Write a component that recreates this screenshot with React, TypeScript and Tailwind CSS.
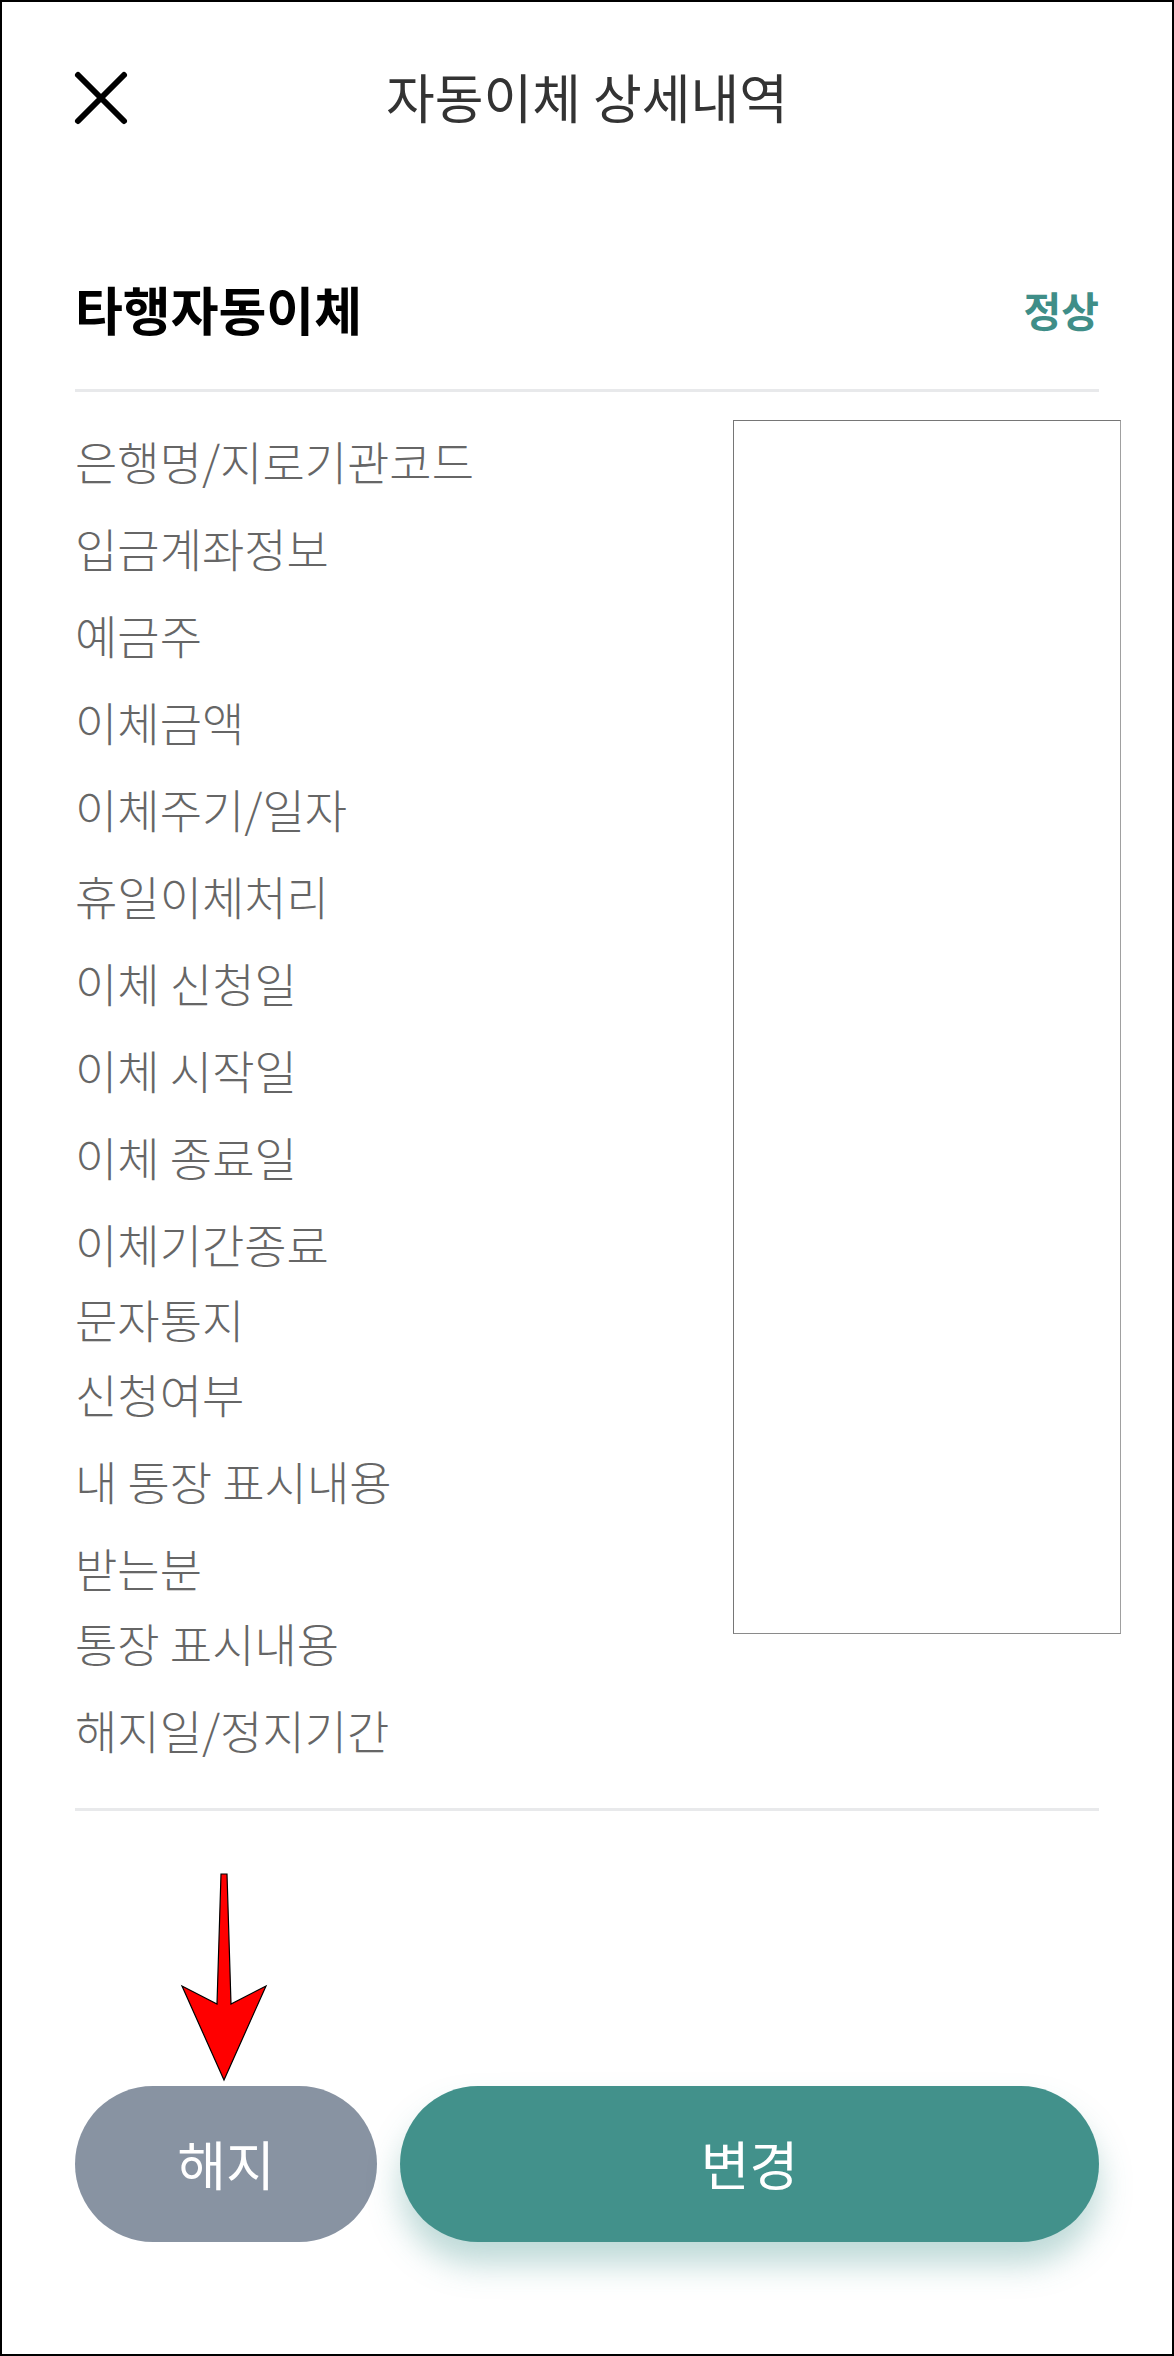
import React from "react";

const FONT = { fontFamily: '"Noto Sans CJK KR", "Noto Sans", sans-serif' };

type Row = string[];

const ROWS: Row[] = [
  ["은행명/지로기관코드"],
  ["입금계좌정보"],
  ["예금주"],
  ["이체금액"],
  ["이체주기/일자"],
  ["휴일이체처리"],
  ["이체 신청일"],
  ["이체 시작일"],
  ["이체 종료일"],
  ["이체기간종료", "문자통지", "신청여부"],
  ["내 통장 표시내용"],
  ["받는분", "통장 표시내용"],
  ["해지일/정지기간"],
];

function CloseIcon() {
  return (
    <svg width="56" height="56" viewBox="0 0 56 56" aria-hidden="true">
      <path d="M5 5 L51 51 M51 5 L5 51" stroke="#000" strokeWidth="6" strokeLinecap="round" fill="none" />
    </svg>
  );
}

function PointerArrow() {
  // red annotation arrow pointing at the 해지 button
  return (
    <svg className="absolute left-[178px] top-[1870px]" width="90" height="212" viewBox="0 0 90 212" aria-hidden="true">
      <polygon
        points="41,2 47,2 51,132 86,114 44,208 2,114 37,132"
        fill="#ff0000"
        stroke="#000"
        strokeWidth="1.2"
        strokeLinejoin="miter"
      />
    </svg>
  );
}

export default function App() {
  return (
    <div
      className="relative flex h-[2356px] w-[1174px] flex-col overflow-hidden border-2 border-black bg-white"
      style={FONT}
    >
      {/* header */}
      <div className="grid h-[188px] grid-cols-[1fr_auto_1fr] items-center px-[71px]">
        <div className="flex items-center pt-[4px]">
          <CloseIcon />
        </div>
        <h1 className="text-[53px] font-normal leading-none text-[#333333]">자동이체 상세내역</h1>
        <div />
      </div>

      <div className="flex flex-col px-[73px]">
        {/* section title */}
        <div className="mt-[89px] flex h-[60px] items-center justify-between">
          <h2 className="text-[52px] font-bold leading-none text-black">타행자동이체</h2>
          <span className="text-[41px] font-bold leading-none text-[#3f8e88]">정상</span>
        </div>
        <div className="mt-[50px] h-[3px] bg-[#e8e9eb]" />

        {/* detail rows */}
        <div className="mt-[28px] flex items-start">
          <dl className="flex flex-1 flex-col gap-[12px] pt-[3px]">
            {ROWS.map((lines) => (
              <dt key={lines.join("/")} className="text-[46px] font-light leading-[75px] text-[#666666]">
                {lines.map((line) => (
                  <div key={line}>{line}</div>
                ))}
              </dt>
            ))}
          </dl>
          <div className="-mr-[22px] h-[1214px] w-[388px] shrink-0 border border-[#767676] border-r-[#a0a0a0] border-b-[#8a8a8a] bg-white" />
        </div>
        <div className="mt-[41px] h-[3px] bg-[#e8e9eb]" />

        {/* actions */}
        <div className="mt-[275px] flex gap-[23px]">
          <button
            type="button"
            className="flex h-[156px] w-[302px] items-center justify-center rounded-full bg-[#8893a2] text-[53px] font-normal text-white"
          >
            해지
          </button>
          <button
            type="button"
            className="flex h-[156px] flex-1 items-center justify-center rounded-full bg-[#42918b] text-[53px] font-normal text-white shadow-[0_22px_32px_rgba(66,145,139,0.35)]"
          >
            변경
          </button>
        </div>
      </div>

      <PointerArrow />
    </div>
  );
}
